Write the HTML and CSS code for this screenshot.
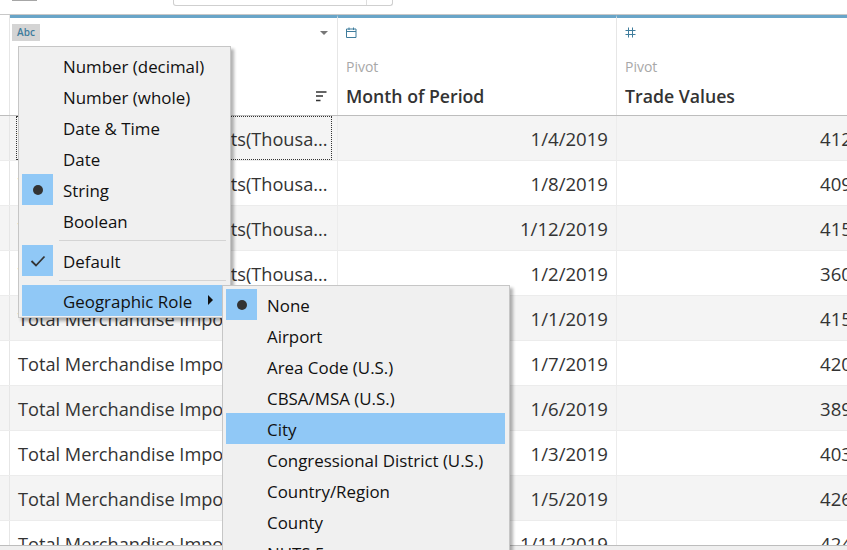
FILE: index.html
```html
<!DOCTYPE html>
<html lang="en">

<head>
    <meta charset="UTF-8">
    <title>Data Source</title>
    <link rel="stylesheet" href="styles.css">
</head>

<body>
    <div class="page">
        <div class="toolbar">
            <div class="toolbar-tab"></div>
            <div class="search-box"><div class="search-btn"></div></div>
        </div>

        <div class="table">
            <div class="head-row">
                <div class="gutter"></div>
                <div class="head-cell">
                    <div class="type-line">
                        <span class="abc">Abc</span>
                        <span class="drop"></span>
                    </div>
                    <div class="source"></div>
                    <div class="title-line">
                        <span class="title"></span>
                        <svg class="sort" width="11" height="11" viewBox="0 0 11 11">
                            <path d="M0 1h10.500M0 5h7M0 9.500h4.500" stroke="#333" stroke-width="1.600" fill="none"/>
                        </svg>
                    </div>
                </div>
                <div class="head-cell">
                    <div class="type-line">
                        <svg width="11" height="11" viewBox="0 0 11 11">
                            <path d="M.5 2h9.500v8.500H.5zM.5 4.500h9.500M3 .5V3M7.500 .5V3" stroke="#3f7c9c" fill="none"/>
                        </svg>
                    </div>
                    <div class="source">Pivot</div>
                    <div class="title-line"><span class="title">Month of Period</span></div>
                </div>
                <div class="head-cell">
                    <div class="type-line">
                        <svg width="11" height="11" viewBox="0 0 11 11">
                            <path d="M3.500.5v10M7.500.5v10M.5 3.500h10M.5 7.500h10" stroke="#3f7c9c" fill="none"/>
                        </svg>
                    </div>
                    <div class="source">Pivot</div>
                    <div class="title-line"><span class="title">Trade Values</span></div>
                </div>
            </div>

            <div class="row">
                <div class="gutter"></div>
                <div class="cell"><span class="focus">Total Merchandise Imports(Thousa...</span></div>
                <div class="cell date">1/4/2019</div>
                <div class="cell value">412</div>
            </div>
            <div class="row">
                <div class="gutter"></div>
                <div class="cell">Total Merchandise Imports(Thousa...</div>
                <div class="cell date">1/8/2019</div>
                <div class="cell value">409</div>
            </div>
            <div class="row">
                <div class="gutter"></div>
                <div class="cell">Total Merchandise Imports(Thousa...</div>
                <div class="cell date">1/12/2019</div>
                <div class="cell value">415</div>
            </div>
            <div class="row">
                <div class="gutter"></div>
                <div class="cell">Total Merchandise Imports(Thousa...</div>
                <div class="cell date">1/2/2019</div>
                <div class="cell value">360</div>
            </div>
            <div class="row">
                <div class="gutter"></div>
                <div class="cell">Total Merchandise Imports(Thousa...</div>
                <div class="cell date">1/1/2019</div>
                <div class="cell value">415</div>
            </div>
            <div class="row">
                <div class="gutter"></div>
                <div class="cell">Total Merchandise Imports(Thousa...</div>
                <div class="cell date">1/7/2019</div>
                <div class="cell value">420</div>
            </div>
            <div class="row">
                <div class="gutter"></div>
                <div class="cell">Total Merchandise Imports(Thousa...</div>
                <div class="cell date">1/6/2019</div>
                <div class="cell value">389</div>
            </div>
            <div class="row">
                <div class="gutter"></div>
                <div class="cell">Total Merchandise Imports(Thousa...</div>
                <div class="cell date">1/3/2019</div>
                <div class="cell value">403</div>
            </div>
            <div class="row">
                <div class="gutter"></div>
                <div class="cell">Total Merchandise Imports(Thousa...</div>
                <div class="cell date">1/5/2019</div>
                <div class="cell value">426</div>
            </div>
            <div class="row">
                <div class="gutter"></div>
                <div class="cell">Total Merchandise Imports(Thousa...</div>
                <div class="cell date">1/11/2019</div>
                <div class="cell value">424</div>
            </div>
        </div>

        <div class="scrollbar"></div>

        <div class="menu type-menu">
            <div class="item"><span class="mark"></span><span class="label">Number (decimal)</span></div>
            <div class="item"><span class="mark"></span><span class="label">Number (whole)</span></div>
            <div class="item"><span class="mark"></span><span class="label">Date &amp; Time</span></div>
            <div class="item"><span class="mark"></span><span class="label">Date</span></div>
            <div class="item"><span class="mark on"><span class="dot"></span></span><span class="label">String</span></div>
            <div class="item"><span class="mark"></span><span class="label">Boolean</span></div>
            <div class="sep"></div>
            <div class="item">
                <span class="mark on">
                    <svg width="16" height="12" viewBox="0 0 16 12">
                        <path d="M1.500 6l4.500 4.500L14.500 1.500" stroke="#333" stroke-width="1.800" fill="none"/>
                    </svg>
                </span>
                <span class="label">Default</span>
            </div>
            <div class="sep"></div>
            <div class="item active"><span class="mark"></span><span class="label">Geographic Role</span><span class="arrow"></span></div>
        </div>

        <div class="menu geo-menu">
            <div class="item"><span class="mark on"><span class="dot"></span></span><span class="label">None</span></div>
            <div class="item"><span class="mark"></span><span class="label">Airport</span></div>
            <div class="item"><span class="mark"></span><span class="label">Area Code (U.S.)</span></div>
            <div class="item"><span class="mark"></span><span class="label">CBSA/MSA (U.S.)</span></div>
            <div class="item active"><span class="mark"></span><span class="label">City</span></div>
            <div class="item"><span class="mark"></span><span class="label">Congressional District (U.S.)</span></div>
            <div class="item"><span class="mark"></span><span class="label">Country/Region</span></div>
            <div class="item"><span class="mark"></span><span class="label">County</span></div>
            <div class="item"><span class="mark"></span><span class="label">NUTS 5</span></div>
        </div>
    </div>
</body>

</html>
```

FILE: styles.css
```css
* {
    box-sizing: border-box;
}

body {
    margin: 0;
    font-family: "Open Sans", "Noto Sans", sans-serif;
    color: #333333;
    background-color: #ffffff;
}

.page {
    position: relative;
    display: flex;
    flex-direction: column;
    width: 847px;
    height: 550px;
    overflow: hidden;
}

.toolbar {
    display: flex;
    flex: none;
    height: 14px;
}

.toolbar-tab {
    width: 25px;
    height: 1px;
    margin-left: 12px;
    background-color: #a6a6a6;
}

.search-box {
    display: flex;
    justify-content: flex-end;
    width: 220px;
    height: 6px;
    margin-left: 136px;
    border: 1px solid #cfcfcf;
    border-top: 0;
    border-radius: 0 0 3px 3px;
}

.search-btn {
    width: 26px;
    border-left: 1px solid #dedede;
}

.table {
    flex: 1;
    overflow: hidden;
    border-top: 1px solid #c8c8c8;
}

.head-row,
.row {
    display: grid;
    grid-template-columns: 10px 328px 279px 230px;
}

.gutter {
    border-right: 1px solid #e6e6e6;
}

.head-row {
    height: 101px;
    border-bottom: 1px solid #bdbdbd;
}

.head-cell {
    border-top: 3px solid #69a5c8;
    border-right: 1px solid #e6e6e6;
    padding: 0 8px;
}

.head-cell:last-child {
    border-right: 0;
}

.type-line {
    display: flex;
    align-items: center;
    justify-content: space-between;
    height: 29px;
}

.abc {
    margin-left: -6px;
    width: 28px;
    height: 17px;
    line-height: 17px;
    text-align: center;
    font-size: 10px;
    font-weight: 600;
    color: #3f7c9c;
    background-color: #d4d4d4;
}

.drop {
    width: 0;
    height: 0;
    margin-right: 1px;
    border-top: 4px solid #777777;
    border-left: 4px solid transparent;
    border-right: 4px solid transparent;
}

.source {
    height: 20px;
    margin-top: 10px;
    line-height: 20px;
    font-size: 14px;
    color: #a8a8a8;
}

.title-line {
    display: flex;
    align-items: center;
    justify-content: space-between;
    height: 30px;
    margin-top: 4px;
}

.title {
    font-size: 17.700px;
    font-weight: 600;
}

.sort {
    margin-right: 2px;
}

.row {
    height: 45px;
    border-bottom: 1px solid #ececec;
}

.row:nth-child(even) {
    background-color: #f4f4f4;
}

.cell {
    display: flex;
    align-items: center;
    padding: 1px 8px 0;
    border-right: 1px solid #ececec;
    font-size: 18.200px;
    white-space: nowrap;
    overflow: hidden;
}

.cell:last-child {
    border-right: 0;
}

.focus {
    display: flex;
    flex: none;
    align-items: center;
    height: 44px;
    margin-top: -1px;
    margin-left: -2px;
    padding: 1px 2px 0;
    width: 316px;
    outline: 1px dotted #333333;
    outline-offset: -1px;
}

.date {
    justify-content: flex-end;
    font-size: 18.600px;
}

.value {
    padding-left: 203px;
    font-size: 18.600px;
}

.scrollbar {
    flex: none;
    height: 5px;
    border-top: 1px solid #bdbdbd;
    background-color: #efefef;
}

/* context menus sit over the table */
.menu {
    position: absolute;
    padding: 3px 4px 3px 3px;
    background-color: #f0f0f0;
    border: 1px solid #c6c6c6;
    box-shadow: 3px 3px 3px rgba(0, 0, 0, 0.3);
    font-size: 16.900px;
    color: #111111;
}

.type-menu {
    left: 18px;
    top: 46px;
    width: 213px;
    height: 272px;
}

.geo-menu {
    left: 222px;
    top: 285px;
    width: 288px;
    height: 290px;
}

.item {
    position: relative;
    display: flex;
    align-items: center;
    height: 31px;
}

.mark {
    display: flex;
    align-items: center;
    justify-content: center;
    flex: none;
    width: 31px;
    height: 31px;
    margin-right: 10px;
}

.label {
    margin-top: 2px;
    white-space: nowrap;
}

.on {
    background-color: #90c8f6;
}

.dot {
    width: 10px;
    height: 10px;
    border-radius: 50%;
    background-color: #333333;
}

.active {
    background-color: #90c8f6;
}

.arrow {
    position: absolute;
    left: 186px;
    top: 10px;
    border-left: 5px solid #111111;
    border-top: 5px solid transparent;
    border-bottom: 5px solid transparent;
}

.sep {
    height: 1px;
    margin: 4px 0 4px 37px;
    background-color: #d4d4d4;
}
```
